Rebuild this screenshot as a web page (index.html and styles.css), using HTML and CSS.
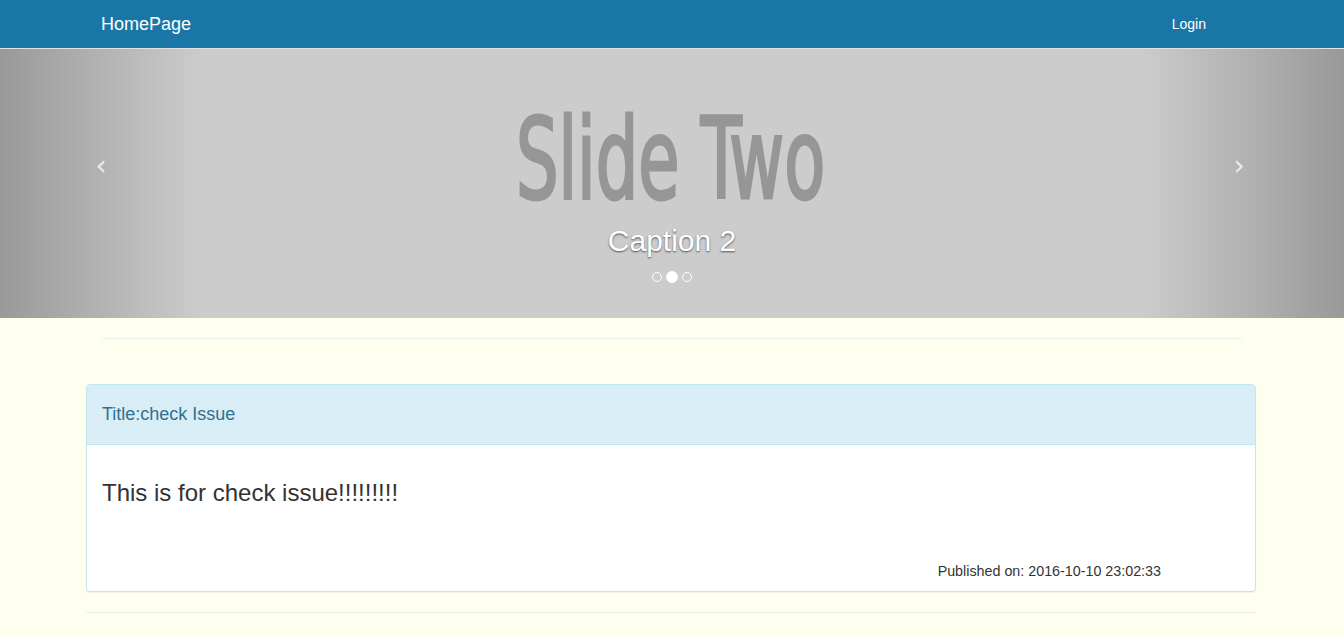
FILE: index.html
```html
<!DOCTYPE html>
<html>
<head>
<meta charset="utf-8">
<link rel="stylesheet" href="styles.css">
</head>
<body>
<nav class="navbar">
  <div class="nav-inner">
    <a class="brand">HomePage</a>
    <a class="nav-link">Login</a>
  </div>
</nav>
<div class="carousel">
  <div class="control control-left"><span class="chev">‹</span></div>
  <div class="slide">
    <div class="slide-title">Slide Two</div>
    <div class="caption">Caption 2</div>
    <div class="indicators">
      <span class="dot"></span><span class="dot active"></span><span class="dot"></span>
    </div>
  </div>
  <div class="control control-right"><span class="chev">›</span></div>
</div>
<div class="container">
  <hr class="rule">
</div>
<div class="panel-wrap">
  <div class="panel">
    <div class="panel-heading">Title:check Issue</div>
    <div class="panel-body">
      <p class="content">This is for check issue!!!!!!!!!</p>
      <div class="meta">Published on: 2016-10-10 23:02:33</div>
    </div>
  </div>
  <hr class="rule rule-wide">
</div>
</body>
</html>
```
FILE: styles.css
```css
* { box-sizing: border-box; }
html, body { margin: 0; padding: 0; }
body {
  background: #fffff0;
  font-family: "Liberation Sans", Arial, sans-serif;
  color: #333;
  font-size: 14px;
}
.navbar {
  height: 49px;
  background: #1a76a6;
  border-bottom: 1px solid #dde3e8;
}
.nav-inner {
  width: 1140px;
  margin: 0 auto;
  height: 48px;
  display: flex;
  align-items: center;
  justify-content: space-between;
  padding-left: 0;
  padding-right: 36px;
}
.brand { color: #fff; font-size: 18px; margin-left: -1px; }
.nav-link { color: #fff; font-size: 14px; }

.carousel {
  height: 269px;
  background: #ccc;
  display: flex;
  position: relative;
}
.control {
  width: 202px;
  flex: none;
  display: flex;
  align-items: center;
  justify-content: center;
  padding-bottom: 36px;
}
.control-left { background: linear-gradient(to right, rgba(0,0,0,.25), rgba(0,0,0,0)); }
.control-right { background: linear-gradient(to left, rgba(0,0,0,.25), rgba(0,0,0,0)); }
.control-right .chev { margin-left: -8px; }
.chev {
  color: #ececec;
  font-size: 28px;
  line-height: 1;
  font-family: "DejaVu Sans", sans-serif;
}
.slide {
  flex: 1;
  display: flex;
  flex-direction: column;
  align-items: center;
}
.slide-title {
  margin-top: 50px;
  font-family: "DejaVu Sans Condensed", "DejaVu Sans", sans-serif;
  font-size: 112px;
  line-height: 120px;
  color: #969696;
  -webkit-text-stroke: 3px #969696;
  transform: scaleX(0.665);
  white-space: nowrap;
  height: 120px;
  margin-left: -2px;
}
.caption {
  margin-top: 4px;
  color: #fff;
  font-size: 30px;
  line-height: 36px;
  text-shadow: 0 1px 2px rgba(0,0,0,.6);
}
.indicators {
  margin-top: 12px;
  display: flex;
  align-items: center;
  gap: 4px;
}
.dot {
  width: 10px;
  height: 10px;
  border: 1px solid #fff;
  border-radius: 50%;
}
.dot.active { width: 12px; height: 12px; background: #fff; }

.container { width: 1140px; margin: 0 auto; padding-top: 20px; }
.rule { margin: 0; border: 0; border-top: 1px solid #eee; }
.panel-wrap { width: 1170px; margin: 45px 0 0 calc(50% - 586px); }
.panel {
  background: #fff;
  border: 1px solid #bce8f1;
  border-radius: 4px;
  box-shadow: 0 1px 1px rgba(0,0,0,.05);
}
.panel-heading {
  background: #d9edf7;
  color: #31708f;
  border-bottom: 1px solid #bce8f1;
  border-radius: 3px 3px 0 0;
  height: 60px;
  padding: 0 15px;
  display: flex;
  align-items: center;
  font-size: 18px;
}
.panel-body { padding: 0 15px; height: 146px; display: flex; flex-direction: column; }
.content { margin: 34px 0 0; font-size: 24px; color: #333; }
.meta { margin-top: auto; margin-bottom: 12px; align-self: flex-end; margin-right: 79px; font-size: 14.3px; }
.rule-wide { margin-top: 20px; }
```
